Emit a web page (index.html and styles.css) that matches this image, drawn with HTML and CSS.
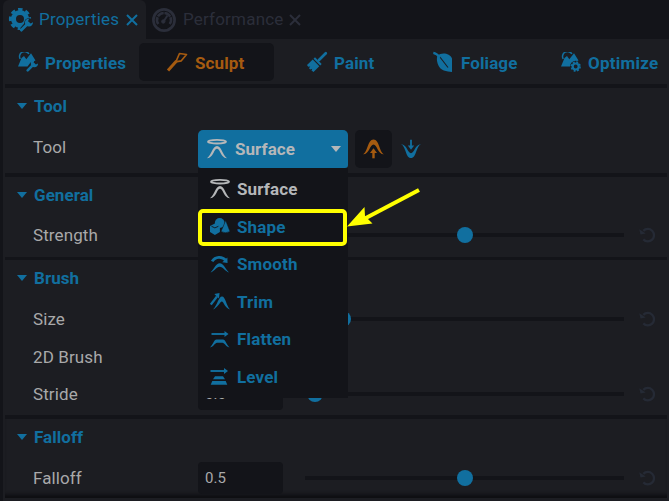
FILE: index.html
```html
<!DOCTYPE html>
<html lang="en">
<head>
<meta charset="utf-8">
<title>Properties</title>
<link rel="stylesheet" href="styles.css">
</head>
<body>
<svg class="defs" width="0" height="0" aria-hidden="true">
  <defs>
    <symbol id="surface" viewBox="0 0 20 20"><ellipse cx="10" cy="2.700" rx="9" ry="1.800" fill="none" stroke="currentColor" stroke-width="1.800"/><path d="M0 19.200C4.500 16 5.500 7 10 7s5.500 9 10 12.200c-3.500 0-5.300-3-6.700-5.700C12.300 11.500 11.600 9.700 10 9.700S7.700 11.500 6.700 13.500C5.300 16.200 3.500 19.200 0 19.200z" fill="currentColor"/></symbol>
    <symbol id="shape" viewBox="0 0 20 17"><circle cx="9.700" cy="5" r="4.900" fill="currentColor"/><path d="M15.700 2.500 20 13.500q-4.500 2.500-9 0z" fill="currentColor" stroke="#131419" stroke-width=".5"/><path d="M4.900 5.500 9.900 8v6L4.900 17 0 14V8z" fill="currentColor"/><path d="m1.500 8.300 3.400 1.600 3.500-1.600" fill="none" stroke="#131419" stroke-width=".9"/></symbol>
    <symbol id="smooth" viewBox="0 0 20 18"><path d="M0 17.500C4 13.500 5.500 7.700 9.700 7.700S15.500 13.500 19.500 17.500c-4-1.300-6.300-6.100-9.800-6.100S4 16.200 0 17.500z" fill="currentColor"/><path d="M1.700 5.700C5 .3 12.500.3 16.200 4.700" fill="none" stroke="currentColor" stroke-width="3"/><path d="m17.800 1.600.2 5.700-5.600-.6z" fill="currentColor"/></symbol>
    <symbol id="trim" viewBox="0 0 20 17"><path d="M3 16.500C7.500 12 8.500 3.500 12 3.500s4 8.500 8 13c-4.700-1-6.500-8-8.200-8s-4.300 6.500-8.800 8z" fill="currentColor"/><path d="M.8 11.500 7 3.500" stroke="currentColor" stroke-width="2.300"/><path d="M4.300 1 9.500 0 9 5.500z" fill="currentColor"/></symbol>
    <symbol id="flatten" viewBox="0 0 20 17"><path d="M1.500 3h14" stroke="currentColor" stroke-width="1.900"/><path d="M14.500 0 18.500 3l-4 3z" fill="currentColor"/><path d="M0 16.500C3 13.500 4 8.500 6.500 8.500h6.500c2.500 0 3.500 5 6.500 8-3.700-.8-5-4.800-7-4.800H7c-2 0-3.300 4-7 4.800z" fill="currentColor"/></symbol>
    <symbol id="level" viewBox="0 0 20 17"><path d="M.5 3h15" stroke="currentColor" stroke-width="1.900"/><path d="M14 0 18 3l-4 3z" fill="currentColor"/><path d="M5 8.300h8l2 3H3zM2.300 13h13.400l1.600 3.700H.7z" fill="currentColor"/></symbol>
    <symbol id="reset" viewBox="0 0 16 16"><path d="M4.300 3.900A6.200 6.200 0 1 1 4.300 12.400" fill="none" stroke="currentColor" stroke-width="2.300"/><path d="M.3 2.300 6.700 6.500 1.500 7.500z" fill="currentColor"/></symbol>
    <symbol id="wrench" viewBox="0 0 12 12"><path d="M1.700 10.300 7.500 4.500" stroke="currentColor" stroke-width="2.600" stroke-linecap="round"/><path d="M8.700 0A3.600 3.600 0 1 0 12 3.400L9.900 4.500 7.600 2.500z" fill="currentColor"/></symbol>
    <symbol id="terrain" viewBox="0 0 20 20"><path d="M2.200 7a4.800 4.800 0 0 1 8.700-5" fill="none" stroke="currentColor" stroke-width="1.500"/><path d="M0 14.500 3.500 6 6 4l2.300 3.200L13 1.300l4.500 7.200-5 2-3 4z" fill="currentColor"/></symbol>
    <symbol id="close" viewBox="0 0 12 12"><path d="m1 1 10 10M11 1 1 11" stroke="currentColor" stroke-width="2"/></symbol>
  </defs>
</svg>
<main class="app">
  <nav class="tabs">
    <div class="tab active">
      <svg class="tab-icon" viewBox="0 0 24 24"><circle cx="11" cy="11" r="6.500" fill="none" stroke="currentColor" stroke-width="5"/><circle cx="11" cy="11" r="9.600" fill="none" stroke="currentColor" stroke-width="3" stroke-dasharray="4.400 3.140" stroke-dashoffset="2.200"/><path d="m13 22 6-7" stroke="#1c1d22" stroke-width="5"/><circle cx="19.800" cy="14.800" r="4.500" fill="#1c1d22"/><use href="#wrench" x="10.500" y="10.500" width="13.500" height="13.500"/></svg>
      <span>Properties</span><svg class="close"><use href="#close"/></svg>
    </div>
    <div class="tab idle">
      <svg class="tab-icon" viewBox="0 0 24 24" fill="none" stroke="currentColor"><circle cx="12" cy="12" r="10.600" stroke-width="2.700"/><path d="M6.300 16a7 7 0 1 1 11.400 0" stroke-width="2.600" stroke-dasharray="7 .7"/><path d="m11.500 13.500 4-6" stroke-width="2"/><circle cx="11.300" cy="13.500" r="1.700" fill="currentColor"/></svg>
      <span>Performance</span><svg class="close"><use href="#close"/></svg>
    </div>
  </nav>
  <nav class="modes">
    <div class="mode m-props"><svg class="mode-icon" viewBox="0 0 20 20"><use href="#terrain" width="20" height="20"/><path d="m9 19 7-8" stroke="#1c1d22" stroke-width="4"/><use href="#wrench" x="8" y="8" width="12" height="12"/></svg><span>Properties</span></div>
    <div class="mode m-sculpt"><svg class="mode-icon" viewBox="0 0 20 20" fill="none" stroke="currentColor"><path d="m1 18.500 8.500-9.500" stroke-width="3"/><path d="M9 9.500 12.500 1.500l7 1-5.200 6.300-4.300.9" stroke-width="1.700" stroke-linejoin="round"/></svg><span>Sculpt</span></div>
    <div class="mode m-paint"><svg class="mode-icon" viewBox="0 0 20 20"><path d="m12 8 6.800-6.800" stroke="currentColor" stroke-width="2.700" stroke-linecap="round"/><path d="m8 5.300 6.700 6.700-1.500 1.500L6.500 6.800zM5.700 7.600l6.600 6.600L6.500 20l-2-1.500.7-1.800-2 .7-1.200-1.200 1.200-1.700-2 .2L0 13z" fill="currentColor"/></svg><span>Paint</span></div>
    <div class="mode m-foliage"><svg class="mode-icon" viewBox="0 0 20 20"><path d="M4.500 3.500C8.500 0 17 1 19 6.500V20c-5-.5-12-1-14.200-8C4 9.500 3.300 6.500 4.500 3.500z" fill="currentColor"/><path d="m6.500 4.500 8.500 11" stroke="#1c1d22" stroke-width="1.100"/><path d="M.3.800C3.500 1.300 4.500 2.500 7 5.500" stroke="currentColor" stroke-width="2.200" fill="none"/></svg><span>Foliage</span></div>
    <div class="mode m-optimize"><svg class="mode-icon" viewBox="0 0 20 20"><use href="#terrain" width="20" height="20"/><circle cx="14.700" cy="14.500" r="5.700" fill="#1c1d22"/><circle cx="14.700" cy="14.500" r="3" fill="none" stroke="currentColor" stroke-width="2.200"/><circle cx="14.700" cy="14.500" r="4.400" fill="none" stroke="currentColor" stroke-width="1.600" stroke-dasharray="1.900 1.556"/></svg><span>Optimize</span></div>
  </nav>

  <section class="group tool">
    <h2><i class="caret"></i>Tool</h2>
    <div class="row">
      <label>Tool</label>
      <div class="select">
        <div class="select-button"><svg class="item-icon"><use href="#surface"/></svg><span>Surface</span><i class="caret"></i></div>
        <div class="menu">
          <div class="item current"><svg class="item-icon"><use href="#surface"/></svg>Surface</div>
          <div class="item"><svg class="item-icon small"><use href="#shape"/></svg>Shape</div>
          <div class="item"><svg class="item-icon small"><use href="#smooth"/></svg>Smooth</div>
          <div class="item"><svg class="item-icon small"><use href="#trim"/></svg>Trim</div>
          <div class="item"><svg class="item-icon small"><use href="#flatten"/></svg>Flatten</div>
          <div class="item"><svg class="item-icon small"><use href="#level"/></svg>Level</div>
          <div class="highlight"></div>
          <svg class="arrow" viewBox="0 0 76 44"><path d="M73 4 17 33.500" stroke="#ff0" stroke-width="4"/><path d="M1 40.500 18.500 21l.5 9 7.500 7.500z" fill="#ff0"/></svg>
        </div>
      </div>
      <div class="direction on"><svg viewBox="0 0 21 20"><path d="M0 15.300C5 13 4.500.5 10.500.5S16 13 21 15.300C15 15.600 14 5.500 10.500 5.500S6 15.600 0 15.300z" fill="currentColor"/><path d="M10.500 19.300v-6" stroke="currentColor" stroke-width="2.400"/><path d="m7 14 3.500-4.700L14 14z" fill="currentColor"/></svg></div>
      <div class="direction down"><svg viewBox="0 0 20 20"><path d="M0 5.200C5 7 4.500 19 10 19S15 7 20 5.200C14.300 5 13.300 14.200 10 14.200S5.700 5 0 5.200z" fill="currentColor"/><path d="M10 .8v7" stroke="currentColor" stroke-width="1.800"/><path d="M6.800 6.500h6.400L10 10.800z" fill="currentColor"/></svg></div>
    </div>
  </section>

  <section class="group general">
    <h2><i class="caret"></i>General</h2>
    <div class="row">
      <label>Strength</label><div class="value"></div><div class="slider"><i class="thumb middle"></i></div><svg class="reset"><use href="#reset"/></svg>
    </div>
  </section>

  <section class="group brush">
    <h2><i class="caret"></i>Brush</h2>
    <div class="row"><label>Size</label><div class="value"></div><div class="slider"><i class="thumb low"></i></div><svg class="reset"><use href="#reset"/></svg></div>
    <div class="row flat"><label>2D Brush</label></div>
    <div class="row"><label>Stride</label><div class="value">0.0</div><div class="slider"><i class="thumb start"></i></div><svg class="reset"><use href="#reset"/></svg></div>
  </section>

  <section class="group falloff">
    <h2><i class="caret"></i>Falloff</h2>
    <div class="row"><label>Falloff</label><div class="value">0.5</div><div class="slider"><i class="thumb middle"></i></div><svg class="reset"><use href="#reset"/></svg></div>
  </section>
</main>
</body>
</html>
```

FILE: styles.css
```css
* { box-sizing: border-box; }
body { margin: 0; background: #131419; font-family: Roboto, sans-serif; font-size: 17px; color: #a9a9aa; overflow: hidden; }
svg { display: block; flex: none; overflow: visible; }
.defs { position: absolute; }
.app { width: 669px; height: 501px; border-left: 3px solid #131419; display: flex; flex-direction: column; background: #1c1d22; }
.tabs { display: flex; height: 39px; flex: none; background: #131419; }
.tab { display: flex; align-items: center; height: 39px; letter-spacing: .2px; }
.tab-icon { width: 24px; height: 24px; }
.tab span { margin-left: 6px; padding-bottom: 1px; }
.active { width: 143px; padding-left: 6px; background: #1c1d22; border-radius: 6px 6px 0 0; color: #116f9f; }
.active span { width: 80px; }
.idle { padding-left: 6px; color: #2b2e3a; }
.idle span { margin-left: 7px; width: 99px; }
.close { width: 12px; height: 12px; margin-left: 7px; }
.modes { display: flex; align-items: center; height: 45px; flex: none; }
.mode { display: flex; align-items: center; height: 38px; gap: 7px; color: #116f9f; font-weight: 700; letter-spacing: .1px; }
.mode span { padding-top: 2px; }
.mode-icon { width: 20px; height: 20px; }
.m-props { width: 136px; padding-left: 15px; }
.m-sculpt { width: 135px; padding-left: 28px; gap: 8px; background: #131419; border-radius: 5px; color: #a65b10; }
.m-paint { width: 126px; padding-left: 33px; }
.m-foliage { width: 127px; padding-left: 33px; gap: 8px; }
.m-optimize { padding-left: 34px; letter-spacing: .25px; }

.group { flex: none; margin: 0 2px; border-top: 4px solid #131419; }
h2 { display: flex; align-items: center; gap: 7px; height: 36px; margin: 0; padding-left: 12px; color: #116f9f; font-size: 17px; font-weight: 700; letter-spacing: .05px; }
.caret { width: 0; height: 0; border: 5px solid transparent; border-top: 6px solid #116f9f; border-bottom: 0; }
.row { display: flex; align-items: center; height: 37px; padding-left: 28px; }
label { width: 165px; flex: none; letter-spacing: .1px; }
.tool { height: 89px; }
.tool .row { height: 49px; }
.tool label { padding-bottom: 3px; }
.general { height: 84px; }
.general .row { height: 44px; }
.brush { height: 158px; border-top-width: 3px; }
.brush h2 { height: 36px; margin-bottom: 4px; }
.brush .row { height: 37.500px; }
.brush .flat { padding-top: 1px; }
.falloff { height: 83px; border-bottom: 1px solid #0e0f12; box-shadow: inset 0 -5px 4px -3px #0b0b0f; }
.falloff .row { height: 46px; }

.select { position: relative; width: 150px; height: 38px; }
.select-button { display: flex; align-items: center; height: 38px; padding: 0 7px 0 9px; border-radius: 5px 5px 3px 3px; background: #116f9f; color: #b5b7b9; font-weight: 700; letter-spacing: .05px; }
.select-button span { margin-left: 8px; flex: 1; }
.select-button .caret { border-top-color: #b5b7b9; }
.item-icon { width: 20px; height: 20px; }
.item-icon.small { width: 20px; height: 17px; }
.menu { position: absolute; z-index: 2; left: 0; top: 38px; width: 150px; height: 230px; padding-top: 3px; background: #131419; font-weight: 700; letter-spacing: .15px; }
.item { display: flex; align-items: center; height: 37.500px; gap: 7px; padding-left: 12px; color: #116f9f; }
.current { color: #b5b7b9; }
.highlight { position: absolute; left: 0; top: 41px; width: 149px; height: 37px; border: 4px solid #ff0; border-radius: 5px; }
.arrow { position: absolute; left: 148px; top: 18px; width: 76px; height: 44px; }
.direction { display: flex; align-items: center; justify-content: center; width: 37px; height: 38px; color: #116f9f; }
.direction svg { width: 20px; height: 20px; }
.direction.on { margin-left: 7px; border-radius: 5px; background: #131419; color: #a65b10; }
.direction.on svg { width: 21px; height: 20px; }

.value { width: 85px; height: 32px; flex: none; padding-left: 7px; border-radius: 4px; background: #131419; font-size: 15px; line-height: 32px; }
.slider { position: relative; width: 319px; height: 4px; flex: none; margin-left: 22px; background: #131419; }
.thumb { position: absolute; top: -6px; width: 16px; height: 16px; border-radius: 50%; background: #116f9f; }
.middle { left: 152px; }
.low { left: 30px; }
.start { left: 2px; }
.reset { width: 16px; height: 16px; margin-left: 15px; color: #252a35; }
```
